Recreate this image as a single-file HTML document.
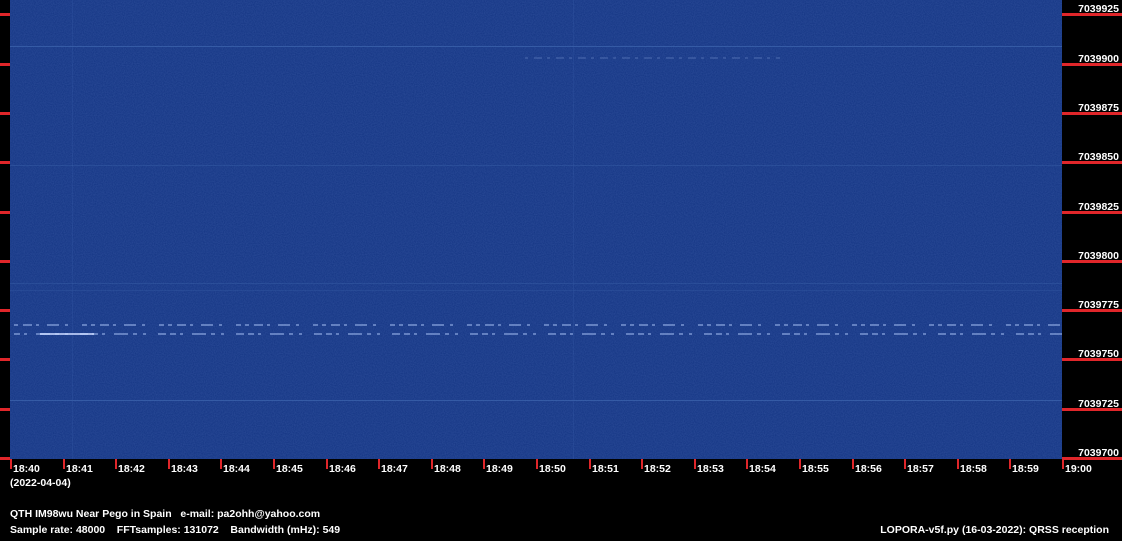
<!DOCTYPE html>
<html><head><meta charset="utf-8"><style>
html,body{margin:0;padding:0;background:#000;width:1122px;height:541px;overflow:hidden}
svg{display:block}
text{font-family:"Liberation Sans",sans-serif;font-weight:bold;font-size:10.5px;fill:#fff}
</style></head><body>
<svg width="1122" height="541" viewBox="0 0 1122 541">
<defs>
<filter id="n" x="0" y="0" width="100%" height="100%">
<feTurbulence type="fractalNoise" baseFrequency="0.9" numOctaves="1" seed="3"/>
<feColorMatrix values="0 0 0 0 0.3  0 0 0 0 0.45  0 0 0 0 0.9  0 0 0 0.2 0"/>
</filter>
</defs>
<rect width="1122" height="541" fill="#000"/>
<rect x="10" y="0" width="1052" height="459" fill="#123382"/>
<rect x="10" y="0" width="1052" height="459" filter="url(#n)"/>
<g stroke="#4068b0" stroke-width="1" opacity="0.7">
<line x1="10" y1="46.5" x2="1062" y2="46.5"/>
<line x1="10" y1="165.5" x2="1062" y2="165.5" opacity="0.5"/>
<line x1="10" y1="283.5" x2="1062" y2="283.5" opacity="0.5"/>
<line x1="10" y1="290.5" x2="1062" y2="290.5" opacity="0.4"/>
<line x1="10" y1="400.5" x2="1062" y2="400.5"/>
<line x1="72.5" y1="0" x2="72.5" y2="459" opacity="0.3"/>
<line x1="573.5" y1="0" x2="573.5" y2="459" opacity="0.3"/>
</g>
<g stroke="#a8c2f5">
<line x1="14" y1="325" x2="1062" y2="325" stroke-width="2" stroke-dasharray="4 5 9 4 3 8 12 6 3 14 5 4" opacity="0.5"/>
<line x1="14" y1="334" x2="1062" y2="334" stroke-width="2" stroke-dasharray="6 4 3 9 14 5 4 6 3 12 8 4" opacity="0.5"/>
<line x1="40" y1="334" x2="94" y2="334" stroke-width="2" stroke="#c8d8ff" opacity="0.8"/>
<line x1="525" y1="58" x2="780" y2="58" stroke-width="1" stroke-dasharray="3 6 8 5" opacity="0.35"/>
</g>
<g fill="#e0262a">
<rect x="0" y="13" width="10" height="3"/><rect x="0" y="63" width="10" height="3"/><rect x="0" y="112" width="10" height="3"/><rect x="0" y="161" width="10" height="3"/><rect x="0" y="211" width="10" height="3"/><rect x="0" y="260" width="10" height="3"/><rect x="0" y="309" width="10" height="3"/><rect x="0" y="358" width="10" height="3"/><rect x="0" y="408" width="10" height="3"/><rect x="0" y="457" width="10" height="3"/>
<rect x="1062" y="13" width="60" height="3"/><rect x="1062" y="63" width="60" height="3"/><rect x="1062" y="112" width="60" height="3"/><rect x="1062" y="161" width="60" height="3"/><rect x="1062" y="211" width="60" height="3"/><rect x="1062" y="260" width="60" height="3"/><rect x="1062" y="309" width="60" height="3"/><rect x="1062" y="358" width="60" height="3"/><rect x="1062" y="408" width="60" height="3"/><rect x="1062" y="457" width="60" height="3"/>
</g>
<g text-anchor="end">
<text x="1119" y="12">7039925</text><text x="1119" y="62">7039900</text><text x="1119" y="111">7039875</text><text x="1119" y="160">7039850</text><text x="1119" y="210">7039825</text><text x="1119" y="259">7039800</text><text x="1119" y="308">7039775</text><text x="1119" y="357">7039750</text><text x="1119" y="407">7039725</text><text x="1119" y="456">7039700</text>
</g>
<g fill="#e0262a">
<rect x="10" y="459" width="2" height="10"/><rect x="63" y="459" width="2" height="10"/><rect x="115" y="459" width="2" height="10"/><rect x="168" y="459" width="2" height="10"/><rect x="220" y="459" width="2" height="10"/><rect x="273" y="459" width="2" height="10"/><rect x="326" y="459" width="2" height="10"/><rect x="378" y="459" width="2" height="10"/><rect x="431" y="459" width="2" height="10"/><rect x="483" y="459" width="2" height="10"/><rect x="536" y="459" width="2" height="10"/><rect x="589" y="459" width="2" height="10"/><rect x="641" y="459" width="2" height="10"/><rect x="694" y="459" width="2" height="10"/><rect x="746" y="459" width="2" height="10"/><rect x="799" y="459" width="2" height="10"/><rect x="852" y="459" width="2" height="10"/><rect x="904" y="459" width="2" height="10"/><rect x="957" y="459" width="2" height="10"/><rect x="1009" y="459" width="2" height="10"/><rect x="1062" y="459" width="2" height="10"/>
</g>
<g>
<text x="13" y="472">18:40</text><text x="66" y="472">18:41</text><text x="118" y="472">18:42</text><text x="171" y="472">18:43</text><text x="223" y="472">18:44</text><text x="276" y="472">18:45</text><text x="329" y="472">18:46</text><text x="381" y="472">18:47</text><text x="434" y="472">18:48</text><text x="486" y="472">18:49</text><text x="539" y="472">18:50</text><text x="592" y="472">18:51</text><text x="644" y="472">18:52</text><text x="697" y="472">18:53</text><text x="749" y="472">18:54</text><text x="802" y="472">18:55</text><text x="855" y="472">18:56</text><text x="907" y="472">18:57</text><text x="960" y="472">18:58</text><text x="1012" y="472">18:59</text><text x="1065" y="472">19:00</text>
<text x="10" y="486">(2022-04-04)</text>
<text x="10" y="517" xml:space="preserve">QTH IM98wu Near Pego in Spain   e-mail: pa2ohh@yahoo.com</text>
<text x="10" y="533" xml:space="preserve">Sample rate: 48000    FFTsamples: 131072    Bandwidth (mHz): 549</text>
<text x="1109" y="533" text-anchor="end">LOPORA-v5f.py (16-03-2022): QRSS reception</text>
</g>
</svg>
</body></html>
